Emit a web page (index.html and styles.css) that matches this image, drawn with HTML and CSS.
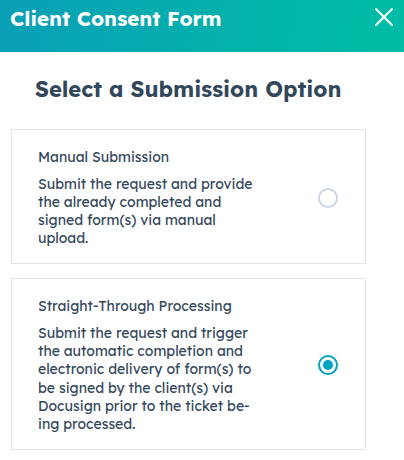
FILE: index.html
```html
<!doctype html>
<html lang="en">
<head>
    <meta charset="UTF-8">
    <meta name="viewport" content="width=device-width, initial-scale=1.0">
    <title>Client Consent Form</title>
    <link rel="stylesheet" href="styles.css">
</head>
<body>
    <header class="modal-header">
        <h1>Client Consent Form</h1>
        <button class="close-btn" aria-label="Close">
            <svg width="18" height="18" viewBox="0 0 18 18">
                <path d="M1 1 L17 17 M17 1 L1 17" stroke="#fff" stroke-width="2" stroke-linecap="round"/>
            </svg>
        </button>
    </header>

    <main class="modal-body">
        <h2>Select a Submission Option</h2>

        <label class="option">
            <div class="option-text">
                <div class="option-title">Manual Submission</div>
                <p>Submit the request and provide the already completed and signed form(s) via manual upload.</p>
            </div>
            <input type="radio" name="submission" value="manual">
            <span class="radio"></span>
        </label>

        <label class="option">
            <div class="option-text">
                <div class="option-title">Straight-Through Processing</div>
                <p>Submit the request and trigger the automatic completion and electronic delivery of form(s) to be signed by the client(s) via Docusign prior to the ticket be&shy;ing processed.</p>
            </div>
            <input type="radio" name="submission" value="stp" checked>
            <span class="radio"></span>
        </label>
    </main>
</body>
</html>
```

FILE: styles.css
```css
* {
    margin: 0;
    padding: 0;
    box-sizing: border-box;
}
body {
    font-family: 'Lexend Deca', 'Open Sans', sans-serif;
    background: #fff;
    color: #33475b;
}
.modal-header {
    height: 52px;
    display: flex;
    align-items: flex-start;
    justify-content: space-between;
    padding: 5px 8px 0 10px;
    background: linear-gradient(100deg, #0a9fb7 0%, #03b2ab 60%, #00bda5 100%);
}
.modal-header h1 {
    color: #fff;
    font-size: 20.5px;
    font-weight: 700;
    line-height: 26px;
}
.close-btn {
    background: none;
    border: none;
    padding: 3px;
    cursor: pointer;
    display: flex;
}
.modal-body {
    padding: 23px 38px 0 11px;
}
h2 {
    font-size: 22px;
    font-weight: 700;
    line-height: 28px;
    margin: 0 0 26px 24px;
    white-space: nowrap;
}
.option {
    display: flex;
    align-items: center;
    gap: 22px;
    border: 1px solid #dfe3eb;
    padding: 17.5px 27px 15.5px 26px;
    margin-bottom: 14px;
    cursor: pointer;
}
.option-text {
    flex: 1;
}
.option-title {
    font-size: 14px;
    line-height: 19px;
    margin-bottom: 8px;
}
.option p {
    font-size: 14px;
    line-height: 18.33px;
    max-width: 222px;
}
.option input {
    display: none;
}
.radio {
    width: 20px;
    height: 20px;
    border-radius: 50%;
    border: 2px solid #cbd6e2;
    flex-shrink: 0;
    display: flex;
    align-items: center;
    justify-content: center;
}
.option input:checked + .radio {
    border-color: #00a4bd;
}
.option input:checked + .radio::after {
    content: "";
    width: 10px;
    height: 10px;
    border-radius: 50%;
    background: #00a4bd;
}
```
